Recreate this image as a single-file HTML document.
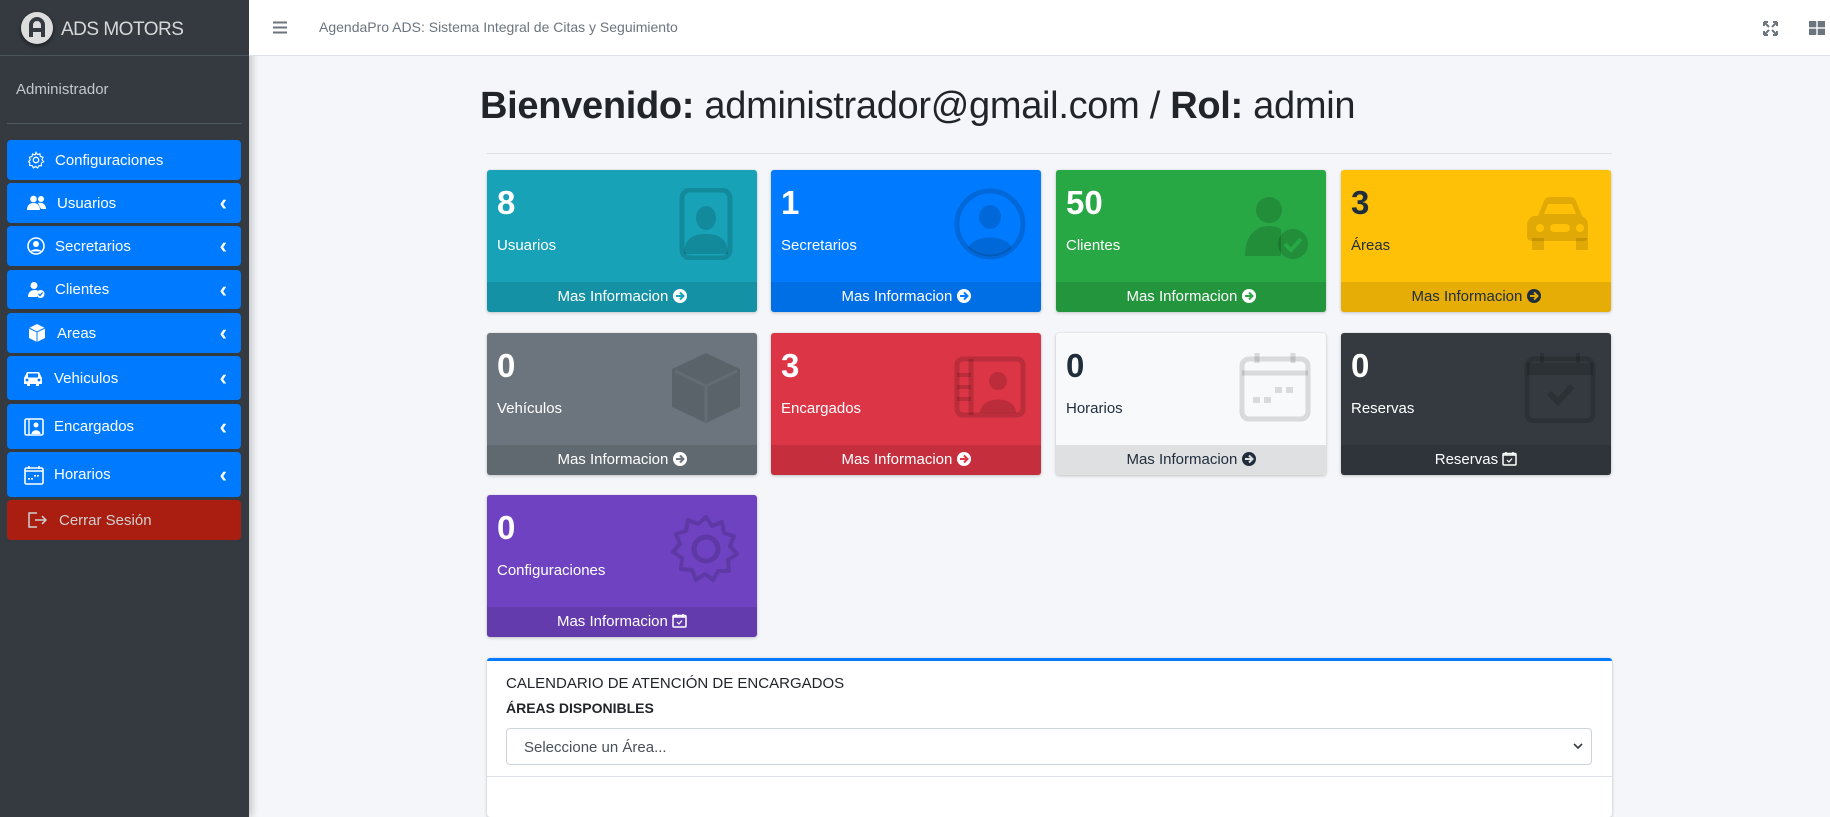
<!DOCTYPE html>
<html><head><meta charset="utf-8">
<style>
*{box-sizing:border-box;margin:0;padding:0}
body{width:1830px;height:817px;overflow:hidden;background:#f4f6f9;font-family:"Liberation Sans",sans-serif;position:relative}
.sb{position:absolute;left:0;top:0;width:249px;height:817px;background:#343a40;box-shadow:2px 0 8px rgba(0,0,0,.25)}
.brand{height:56px;border-bottom:1px solid #4b545c;position:relative}
.logo{position:absolute;left:21px;top:12px;width:32px;height:32px;border-radius:50%;background:#ddd;box-shadow:0 2px 4px rgba(0,0,0,.5)}
.brand span{position:absolute;left:61px;top:19px;color:#fff;font-size:19px;letter-spacing:-.5px;opacity:.8}
.adm{position:absolute;left:16px;top:81px;color:#c2c7d0;font-size:15px}
.sep{position:absolute;left:7px;right:7px;top:123px;border-top:1px solid #4f5962}
.mi{position:absolute;left:7px;width:234px;background:#007bff;border-radius:4px;color:#fff;font-size:15px;display:flex;align-items:center;padding-left:20px}
.mi svg{margin-right:10px}
.mi .ch{position:absolute;right:14px;top:50%;margin-top:-13px;font-size:22px;font-weight:bold}
.top{position:absolute;left:249px;right:0;top:0;height:56px;background:#fff;border-bottom:1px solid #dee2e6}
.ttl{position:absolute;left:70px;top:19px;color:#6c757d;font-size:14px}
h1{position:absolute;left:480px;top:85px;font-size:38px;font-weight:normal;color:#212529;white-space:nowrap;letter-spacing:-.3px}
h1 b{font-weight:bold}
.hr{position:absolute;left:487px;width:1125px;top:153px;border-top:1px solid #dcdfe3}
.card{position:absolute;width:270px;height:142px;border-radius:3px;box-shadow:0 0 1px rgba(0,0,0,.125),0 1px 3px rgba(0,0,0,.2);overflow:hidden;color:#fff}
.card .n{position:absolute;left:10px;top:14px;font-size:33px;font-weight:bold}
.card .l{position:absolute;left:10px;top:67px;font-size:15px}
.card .ic{position:absolute;right:15px;top:18px;width:72px;height:72px}
.card .f{position:absolute;left:0;right:0;bottom:0;height:30px;background:rgba(0,0,0,.1);text-align:center;font-size:15px;line-height:30px}
.cal{position:absolute;left:487px;top:658px;width:1125px;height:159px;background:#fff;border-top:3px solid #007bff;border-radius:3px;box-shadow:0 0 1px rgba(0,0,0,.125),0 1px 3px rgba(0,0,0,.2)}
.cal .t{position:absolute;left:19px;top:14px;font-size:15px;color:#212529}
.cal .s{position:absolute;left:19px;top:39px;font-size:14px;font-weight:bold;color:#212529}
.sel{position:absolute;left:19px;right:20px;top:67px;height:37px;border:1px solid #ced4da;border-radius:4px;font-size:15px;color:#495057;padding:10px 17px}
.cal .ln{position:absolute;left:0;right:0;top:115px;border-top:1px solid #dee2e6}
</style></head><body>
<div class="sb">
 <div class="brand"><div class="logo"><svg width="32" height="32" viewBox="0 0 32 32"><path d="M10 25V13a6 6 0 0 1 12 0v12M10 18h12" stroke="#343a40" stroke-width="4" fill="none"/></svg></div><span>ADS MOTORS</span></div>
 <div class="adm">Administrador</div>
 <div class="sep"></div>
 <div class="mi" style="top:140px;height:40px"><svg width="18" height="18" viewBox="0 0 20 20"><circle cx="10" cy="10" r="3" fill="none" stroke="#fff" stroke-width="1.5"/><path d="M10 1.5l1.5 2.5 2.8-.8.6 2.9 2.8.9-1 2.7 1.8 2.2-2.5 1.5.1 2.9-2.9.1-1.4 2.5-2.3-1.8-2.4 1.7-1.3-2.6-2.9-.2.2-2.9L1.7 12l1.9-2.2-.9-2.8 2.8-.8.7-2.8 2.8.9z" fill="none" stroke="#fff" stroke-width="1.3"/></svg>Configuraciones</div>
 <div class="mi" style="top:183px;height:40px"><svg width="20" height="16" viewBox="0 0 20 16"><circle cx="6.5" cy="4" r="3.3" fill="#fff"/><circle cx="14" cy="4" r="3" fill="#fff"/><path d="M0 15c0-5 3-7 6.5-7s6.5 2 6.5 7zM11 8c4-1 8 1 8 6h-5z" fill="#fff"/></svg>Usuarios<span class="ch">‹</span></div>
 <div class="mi" style="top:226px;height:40px"><svg width="18" height="18" viewBox="0 0 18 18"><circle cx="9" cy="9" r="8" fill="none" stroke="#fff" stroke-width="1.6"/><circle cx="9" cy="7" r="3" fill="#fff"/><path d="M3.5 14.5c1.5-3 9.5-3 11 0" fill="#fff"/></svg>Secretarios<span class="ch">‹</span></div>
 <div class="mi" style="top:270px;height:39px"><svg width="18" height="18" viewBox="0 0 18 18"><circle cx="7" cy="4.5" r="3.5" fill="#fff"/><path d="M1 16c0-5 3-7 7-7 1 0 2 .3 2.8.6L10 16z" fill="#fff"/><circle cx="13.5" cy="13" r="4" fill="#fff"/><path d="M11.5 13l1.5 1.5 2.5-3" stroke="#007bff" stroke-width="1.3" fill="none"/></svg>Clientes<span class="ch">‹</span></div>
 <div class="mi" style="top:313px;height:40px"><svg width="20" height="20" viewBox="0 0 20 20"><path d="M10 1l8 4v10l-8 4-8-4V5z" fill="#fff"/><path d="M2 5l8 4 8-4M10 9v10" stroke="#007bff" stroke-width="1" fill="none"/></svg>Areas<span class="ch">‹</span></div>
 <div class="mi" style="top:356px;height:44px;padding-left:15px"><svg width="22" height="16" viewBox="0 0 22 16"><path d="M5 2h12l3 6v6h-3v2h-3v-2H8v2H5v-2H2V8z" fill="#fff"/><rect x="6" y="3.5" width="10" height="4" fill="#007bff"/><circle cx="5" cy="10" r="1.4" fill="#007bff"/><circle cx="17" cy="10" r="1.4" fill="#007bff"/></svg>Vehiculos<span class="ch">‹</span></div>
 <div class="mi" style="top:404px;height:45px;padding-left:17px"><svg width="20" height="18" viewBox="0 0 20 18"><rect x="1" y="1" width="18" height="16" rx="1.5" fill="none" stroke="#fff" stroke-width="1.6"/><path d="M5 1v16" stroke="#fff" stroke-width="1.4"/><circle cx="12" cy="7" r="2.5" fill="#fff"/><path d="M7.5 16c0-5 9-5 9 0z" fill="#fff"/></svg>Encargados<span class="ch">‹</span></div>
 <div class="mi" style="top:452px;height:45px;padding-left:17px"><svg width="20" height="20" viewBox="0 0 20 20"><rect x="1" y="3" width="18" height="16" rx="1.5" fill="none" stroke="#fff" stroke-width="1.6"/><path d="M1 6h18M5 1v3M15 1v3" stroke="#fff" stroke-width="1.6"/><rect x="4" y="13" width="2" height="1.6" fill="#fff"/><rect x="7" y="13" width="2" height="1.6" fill="#fff"/><rect x="10" y="10" width="2" height="1.6" fill="#fff"/><rect x="13" y="10" width="2" height="1.6" fill="#fff"/></svg>Horarios<span class="ch">‹</span></div>
 <div class="mi" style="top:500px;height:40px;background:#a91e10;color:#d0d0d0;padding-left:20px"><svg width="20" height="18" viewBox="0 0 20 18" style="margin-right:12px"><path d="M10 2H2v14h8M8 9h11M15 5l4 4-4 4" stroke="#d0d0d0" stroke-width="1.5" fill="none"/></svg>Cerrar Sesión</div>
</div>
<div class="top">
 <svg style="position:absolute;left:24px;top:21px" width="14" height="13" viewBox="0 0 14 13"><path d="M0 1.5h14M0 6.5h14M0 11.5h14" stroke="#6c757d" stroke-width="2"/></svg>
 <div class="ttl">AgendaPro ADS: Sistema Integral de Citas y Seguimiento</div>
 <svg style="position:absolute;left:1514px;top:21px" width="15" height="15" viewBox="0 0 15 15"><path d="M1 1l5 5M14 1L9 6M1 14l5-5M14 14L9 9M1 1h4M1 1v4M14 1h-4M14 1v4M1 14h4M1 14v-4M14 14h-4M14 14v-4" stroke="#6c757d" stroke-width="2" fill="none"/></svg>
 <svg style="position:absolute;left:1560px;top:21px" width="16" height="14" viewBox="0 0 16 14"><rect x="0" y="0" width="7.3" height="6.3" fill="#6c757d"/><rect x="8.7" y="0" width="7.3" height="6.3" fill="#6c757d"/><rect x="0" y="7.7" width="7.3" height="6.3" fill="#6c757d"/><rect x="8.7" y="7.7" width="7.3" height="6.3" fill="#6c757d"/></svg>
</div>
<h1><b>Bienvenido:</b> administrador@gmail.com / <b>Rol:</b> admin</h1>
<div class="hr"></div>

<div class="card" style="left:487px;top:170px;background:#17a2b8"><div class="n">8</div><div class="l">Usuarios</div>
<svg class="ic" viewBox="0 0 72 72"><rect x="12" y="2" width="48" height="68" rx="8" fill="none" stroke="rgba(0,0,0,.15)" stroke-width="5"/><ellipse cx="36" cy="30" rx="10" ry="12" fill="rgba(0,0,0,.15)"/><path d="M14 66c0-16 10-20 22-20s22 4 22 20z" fill="rgba(0,0,0,.15)"/></svg>
<div class="f">Mas Informacion <svg width="14" height="14" viewBox="0 0 14 14" style="vertical-align:-2px"><circle cx="7" cy="7" r="7" fill="#fff"/><path d="M3 7h7M7 3.5L10.5 7 7 10.5" stroke="#17a2b8" stroke-width="2" fill="none"/></svg></div></div>

<div class="card" style="left:771px;top:170px;background:#007bff"><div class="n">1</div><div class="l">Secretarios</div>
<svg class="ic" viewBox="0 0 72 72"><circle cx="36" cy="36" r="33" fill="none" stroke="rgba(0,0,0,.15)" stroke-width="5"/><ellipse cx="36" cy="29" rx="11" ry="12" fill="rgba(0,0,0,.15)"/><path d="M14 60c6-14 38-14 44 0a33 33 0 0 1-44 0z" fill="rgba(0,0,0,.15)"/></svg>
<div class="f">Mas Informacion <svg width="14" height="14" viewBox="0 0 14 14" style="vertical-align:-2px"><circle cx="7" cy="7" r="7" fill="#fff"/><path d="M3 7h7M7 3.5L10.5 7 7 10.5" stroke="#007bff" stroke-width="2" fill="none"/></svg></div></div>

<div class="card" style="left:1056px;top:170px;background:#28a745"><div class="n">50</div><div class="l">Clientes</div>
<svg class="ic" viewBox="0 0 72 72"><circle cx="30" cy="22" r="13" fill="rgba(0,0,0,.15)"/><path d="M6 68c0-22 12-30 24-30 5 0 9 1 12 3v27z" fill="rgba(0,0,0,.15)"/><circle cx="54" cy="56" r="15" fill="rgba(0,0,0,.15)"/><path d="M46 56l6 6 10-11" stroke="#28a745" stroke-width="4" fill="none"/></svg>
<div class="f">Mas Informacion <svg width="14" height="14" viewBox="0 0 14 14" style="vertical-align:-2px"><circle cx="7" cy="7" r="7" fill="#fff"/><path d="M3 7h7M7 3.5L10.5 7 7 10.5" stroke="#28a745" stroke-width="2" fill="none"/></svg></div></div>

<div class="card" style="left:1341px;top:170px;background:#ffc107;color:#1f2d3d"><div class="n">3</div><div class="l">Áreas</div>
<svg class="ic" viewBox="0 0 72 72"><path d="M14 28l6-15c1-3 3-4 6-4h20c3 0 5 1 6 4l6 15c4 2 6 5 6 10v10c0 3-2 5-5 5H8c-3 0-5-2-5-5V38c0-5 2-8 6-10z" fill="rgba(0,0,0,.12)"/><rect x="8" y="50" width="12" height="12" fill="rgba(0,0,0,.12)"/><rect x="52" y="50" width="12" height="12" fill="rgba(0,0,0,.12)"/><path d="M20 26l4-10h24l4 10z" fill="#ffc107"/><circle cx="16" cy="40" r="4" fill="#ffc107"/><circle cx="56" cy="40" r="4" fill="#ffc107"/><rect x="26" y="36" width="20" height="8" rx="4" fill="#ffc107"/></svg>
<div class="f">Mas Informacion <svg width="14" height="14" viewBox="0 0 14 14" style="vertical-align:-2px"><circle cx="7" cy="7" r="7" fill="#1f2d3d"/><path d="M3 7h7M7 3.5L10.5 7 7 10.5" stroke="#e5ad06" stroke-width="2" fill="none"/></svg></div></div>

<div class="card" style="left:487px;top:333px;background:#6c757d"><div class="n">0</div><div class="l">Vehículos</div>
<svg class="ic" viewBox="0 0 72 72"><path d="M36 2l34 16v38L36 72 2 56V18z" fill="rgba(0,0,0,.15)"/><path d="M5 20l31 15 31-15M36 35v36" stroke="#6c757d" stroke-width="3" fill="none" opacity=".5"/></svg>
<div class="f">Mas Informacion <svg width="14" height="14" viewBox="0 0 14 14" style="vertical-align:-2px"><circle cx="7" cy="7" r="7" fill="#fff"/><path d="M3 7h7M7 3.5L10.5 7 7 10.5" stroke="#6c757d" stroke-width="2" fill="none"/></svg></div></div>

<div class="card" style="left:771px;top:333px;background:#dc3545"><div class="n">3</div><div class="l">Encargados</div>
<svg class="ic" viewBox="0 0 72 72"><rect x="3" y="8" width="66" height="56" rx="6" fill="none" stroke="rgba(0,0,0,.15)" stroke-width="5"/><path d="M17 8v56" stroke="rgba(0,0,0,.15)" stroke-width="5"/><path d="M3 24h14M3 36h14M3 48h14" stroke="rgba(0,0,0,.15)" stroke-width="4"/><circle cx="44" cy="30" r="9" fill="rgba(0,0,0,.15)"/><path d="M26 62c0-18 36-18 36 0z" fill="rgba(0,0,0,.15)"/></svg>
<div class="f">Mas Informacion <svg width="14" height="14" viewBox="0 0 14 14" style="vertical-align:-2px"><circle cx="7" cy="7" r="7" fill="#fff"/><path d="M3 7h7M7 3.5L10.5 7 7 10.5" stroke="#dc3545" stroke-width="2" fill="none"/></svg></div></div>

<div class="card" style="left:1056px;top:333px;background:#f8f9fa;color:#1f2d3d"><div class="n">0</div><div class="l">Horarios</div>
<svg class="ic" viewBox="0 0 72 72"><rect x="3" y="8" width="66" height="60" rx="7" fill="none" stroke="rgba(0,0,0,.12)" stroke-width="5"/><path d="M3 22h66M18 2v10M54 2v10" stroke="rgba(0,0,0,.12)" stroke-width="5"/><rect x="14" y="46" width="7" height="6" fill="rgba(0,0,0,.12)"/><rect x="25" y="46" width="7" height="6" fill="rgba(0,0,0,.12)"/><rect x="36" y="36" width="7" height="6" fill="rgba(0,0,0,.12)"/><rect x="47" y="36" width="7" height="6" fill="rgba(0,0,0,.12)"/></svg>
<div class="f" style="background:#dfe0e1">Mas Informacion <svg width="14" height="14" viewBox="0 0 14 14" style="vertical-align:-2px"><circle cx="7" cy="7" r="7" fill="#1f2d3d"/><path d="M3 7h7M7 3.5L10.5 7 7 10.5" stroke="#dfe0e1" stroke-width="2" fill="none"/></svg></div></div>

<div class="card" style="left:1341px;top:333px;background:#343a40"><div class="n">0</div><div class="l">Reservas</div>
<svg class="ic" viewBox="0 0 72 72"><rect x="3" y="8" width="66" height="62" rx="7" fill="none" stroke="rgba(0,0,0,.15)" stroke-width="5"/><path d="M3 18h66" stroke="rgba(0,0,0,.15)" stroke-width="12"/><path d="M18 2v10M54 2v10" stroke="rgba(0,0,0,.15)" stroke-width="4"/><path d="M25 42l9 9 14-16" stroke="rgba(0,0,0,.15)" stroke-width="6" fill="none"/></svg>
<div class="f">Reservas <svg width="15" height="15" viewBox="0 0 15 15" style="vertical-align:-2px"><rect x="1" y="2.5" width="13" height="11.5" rx="1" fill="none" stroke="#fff" stroke-width="1.5"/><path d="M1 4h13M4 1v3M11 1v3" stroke="#fff" stroke-width="1.5"/><path d="M5 9l2 2 3-3.5" stroke="#fff" stroke-width="1.2" fill="none"/></svg></div></div>

<div class="card" style="left:487px;top:495px;background:#6f42c1"><div class="n">0</div><div class="l">Configuraciones</div>
<svg class="ic" viewBox="0 0 72 72"><circle cx="36" cy="36" r="12" fill="none" stroke="rgba(0,0,0,.15)" stroke-width="5"/><path d="M36 4l6 9 10-4 2 11 10 3-4 10 7 8-9 6 1 11-11 0-5 9-8-6-9 6-4-10-11-1 1-11-9-6 7-8-4-10 10-3 2-11 10 4z" fill="none" stroke="rgba(0,0,0,.15)" stroke-width="4" stroke-linejoin="round"/></svg>
<div class="f">Mas Informacion <svg width="15" height="15" viewBox="0 0 15 15" style="vertical-align:-2px"><rect x="1" y="2.5" width="13" height="11.5" rx="1" fill="none" stroke="#fff" stroke-width="1.5"/><path d="M1 4h13M4 1v3M11 1v3" stroke="#fff" stroke-width="1.5"/><path d="M5 9l2 2 3-3.5" stroke="#fff" stroke-width="1.2" fill="none"/></svg></div></div>

<div class="cal">
 <div class="t">CALENDARIO DE ATENCIÓN DE ENCARGADOS</div>
 <div class="s">ÁREAS DISPONIBLES</div>
 <div class="sel">Seleccione un Área...<svg style="position:absolute;right:8px;top:14px" width="10" height="7" viewBox="0 0 10 7"><path d="M1 1l4 4 4-4" stroke="#343a40" stroke-width="1.6" fill="none"/></svg></div>
 <div class="ln"></div>
</div>
</body></html>
